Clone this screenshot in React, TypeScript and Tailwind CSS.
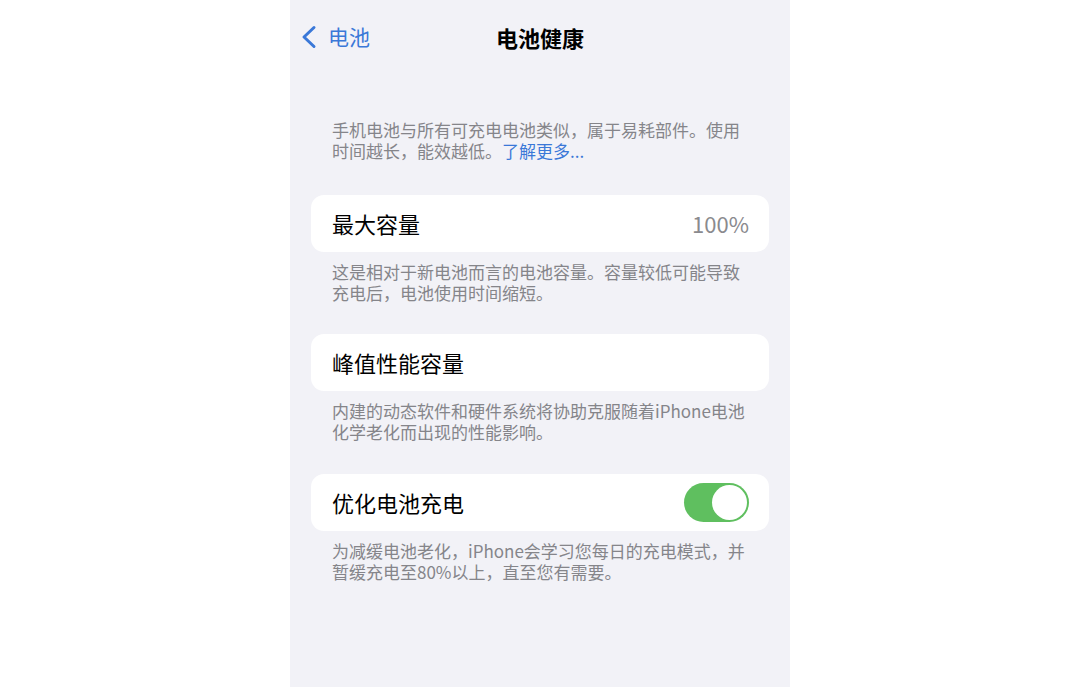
import React from "react";

const font = { fontFamily: '"Noto Sans CJK SC", "Noto Sans", sans-serif' };

function Footnote({ children, className = "" }: { children: React.ReactNode; className?: string }) {
  return (
    <p className={`px-[42px] text-[17px] leading-[20.5px] text-[#85858a] whitespace-nowrap ${className}`}>
      {children}
    </p>
  );
}

function Card({ children, className = "" }: { children: React.ReactNode; className?: string }) {
  return (
    <div className={`mx-[21px] flex h-[57px] items-center justify-between rounded-[13px] bg-white pl-[21px] pr-[20px] ${className}`}>
      {children}
    </div>
  );
}

function Toggle() {
  return (
    <div className="flex h-[39px] w-[65px] items-center justify-end rounded-full bg-[#5fbf5f] p-[2px]">
      <div className="h-[35px] w-[35px] rounded-full bg-white" />
    </div>
  );
}

export default function App() {
  return (
    <div className="flex h-[687px] w-full justify-center overflow-hidden bg-white" style={font}>
      <div className="h-full w-[500px] bg-[#f2f2f7]">
        <header className="grid h-[73px] grid-cols-[1fr_auto_1fr] items-center">
          <div className="flex items-center gap-[10px] pl-[10px] text-[#3a78d8]">
            <svg width="18" height="24" viewBox="0 0 18 24" fill="none">
              <path d="M14 2.5L4 12l10 9.5" stroke="currentColor" strokeWidth="3" strokeLinecap="round" strokeLinejoin="round" />
            </svg>
            <span className="text-[21px] leading-none">电池</span>
          </div>
          <h1 className="text-[22px] font-bold leading-none text-black">电池健康</h1>
          <div />
        </header>

        <Footnote className="mt-[47px]">
          手机电池与所有可充电电池类似，属于易耗部件。使用
          <br />
          时间越长，能效越低。<span className="text-[#3a78d8]">了解更多...</span>
        </Footnote>

        <Card className="mt-[34px]">
          <span className="text-[22px] text-black">最大容量</span>
          <span className="text-[22px] text-[#8a8a8e]">100%</span>
        </Card>
        <Footnote className="mt-[10px]">
          这是相对于新电池而言的电池容量。容量较低可能导致
          <br />
          充电后，电池使用时间缩短。
        </Footnote>

        <Card className="mt-[31px]">
          <span className="text-[22px] text-black">峰值性能容量</span>
        </Card>
        <Footnote className="mt-[10px]">
          内建的动态软件和硬件系统将协助克服随着iPhone电池
          <br />
          化学老化而出现的性能影响。
        </Footnote>

        <Card className="mt-[32px]">
          <span className="text-[22px] text-black">优化电池充电</span>
          <Toggle />
        </Card>
        <Footnote className="mt-[10px]">
          为减缓电池老化，iPhone会学习您每日的充电模式，并
          <br />
          暂缓充电至80%以上，直至您有需要。
        </Footnote>
      </div>
    </div>
  );
}
